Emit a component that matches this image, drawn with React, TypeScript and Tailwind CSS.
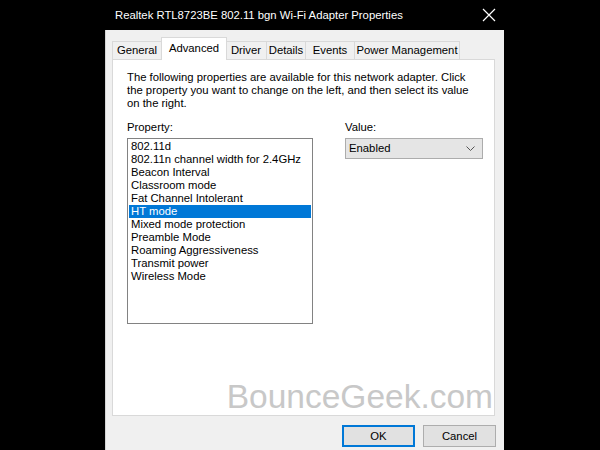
const tabs = [
  { label: "General", w: "w-[50px]" },
  { label: "Advanced", w: "w-[66px]", active: true },
  { label: "Driver", w: "w-[42px]" },
  { label: "Details", w: "w-[40px]" },
  { label: "Events", w: "w-[50px]" },
  { label: "Power Management", w: "w-[106px]" },
];

const props = [
  "802.11d",
  "802.11n channel width for 2.4GHz",
  "Beacon Interval",
  "Classroom mode",
  "Fat Channel Intolerant",
  "HT mode",
  "Mixed mode protection",
  "Preamble Mode",
  "Roaming Aggressiveness",
  "Transmit power",
  "Wireless Mode",
];

export default function App() {
  return (
    <div className="w-[600px] h-[450px] bg-black flex pl-[105px] overflow-hidden text-[11.3px] whitespace-nowrap text-black font-['Liberation_Sans',Arial,sans-serif]">
      <div className="w-[399px] h-[450px] flex flex-col">
        {/* title bar */}
        <div className="h-[30px] flex items-center justify-between pl-[10px] pr-[8px] text-white">
          <span className="text-[11.3px]">Realtek RTL8723BE 802.11 bgn Wi-Fi Adapter Properties</span>
          <svg width="14" height="14" viewBox="0 0 14 14" stroke="white" strokeWidth="1.2">
            <path d="M1 1 L13 13 M13 1 L1 13" />
          </svg>
        </div>

        <div className="flex-1 bg-[#f0f0f0] border-l border-[#d4d4d4] pl-[6px] pr-[9px] pt-[7px] flex flex-col">
          {/* tabs */}
          <div className="flex items-end h-[22px]">
            {tabs.map((t) =>
              t.active ? (
                <div
                  key={t.label}
                  className={`${t.w} h-[23px] -mb-px -mx-px relative z-10 bg-white border border-b-0 border-[#d9d9d9] flex items-start justify-center pt-[2px]`}
                >
                  {t.label}
                </div>
              ) : (
                <div
                  key={t.label}
                  className={`${t.w} h-[18px] bg-[#f0f0f0] border border-b-0 border-[#d9d9d9] -ml-px first:ml-0 flex items-center justify-center`}
                >
                  {t.label}
                </div>
              )
            )}
          </div>

          {/* panel */}
          <div className="relative h-[357px] bg-white border border-[#d9d9d9] pl-[14px] pt-[11px]">
            <p className="leading-[13px]">
              The following properties are available for this network adapter. Click
              <br />
              the property you want to change on the left, and then select its value
              <br />
              on the right.
            </p>

            <div className="flex mt-[11px]">
              <div className="w-[186px] flex flex-col">
                <span className="leading-[13px]">Property:</span>
                <div className="mt-[4px] h-[186px] border border-[#828282] p-px">
                  {props.map((p) => (
                    <div
                      key={p}
                      className={`h-[13px] leading-[13px] pl-[2px] ${p === "HT mode" ? "bg-[#0078d7] text-white" : ""}`}
                    >
                      {p}
                    </div>
                  ))}
                </div>
              </div>

              <div className="ml-[32px] flex flex-col">
                <span className="leading-[13px]">Value:</span>
                <div className="mt-[4px] w-[138px] h-[21px] bg-[#e5e5e5] border border-[#acacac] flex items-center justify-between pl-[3px] pr-[7px]">
                  <span>Enabled</span>
                  <svg width="9" height="6" viewBox="0 0 9 6" fill="none" stroke="#555" strokeWidth="1">
                    <path d="M0.5 0.5 L4.5 4.5 L8.5 0.5" />
                  </svg>
                </div>
              </div>
            </div>

            <span className="absolute right-[1px] bottom-[-2px] text-[33.5px] leading-[40px] text-[#c8c8c8]">
              BounceGeek.com
            </span>
          </div>

          {/* buttons */}
          <div className="flex justify-end gap-[8px] pt-[9px] -mr-px">
            <button className="w-[73px] h-[22px] bg-[#e1e1e1] border-2 border-[#0078d7] flex items-center justify-center">
              OK
            </button>
            <button className="w-[73px] h-[22px] bg-[#e1e1e1] border border-[#adadad] flex items-center justify-center">
              Cancel
            </button>
          </div>
        </div>
      </div>
    </div>
  );
}
